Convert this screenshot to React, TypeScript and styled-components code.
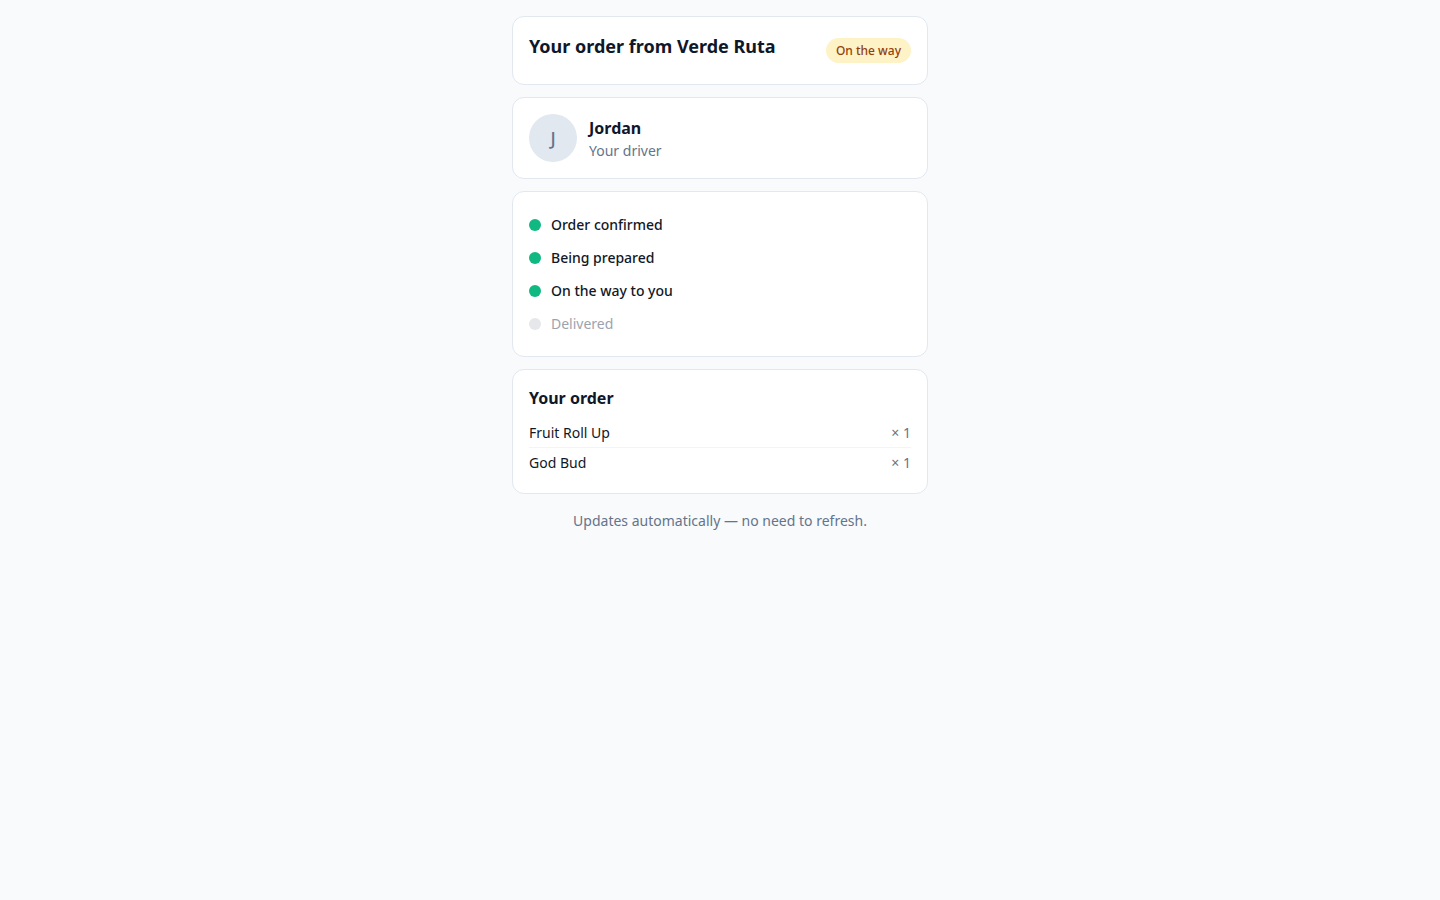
import React from "react";
import styled, { createGlobalStyle } from "styled-components";

const GlobalStyle = createGlobalStyle`
  * { box-sizing: border-box; }
  html, body { margin: 0; padding: 0; background: #f8fafc; }
  body {
    font-family: "Noto Sans", "Open Sans", sans-serif;
    color: #0f172a;
    -webkit-font-smoothing: antialiased;
  }
`;

const Page = styled.main`
  min-height: 100vh;
  background: #f8fafc;
  padding: 16px;
  display: flex;
  justify-content: center;
`;

const Column = styled.div`
  width: 416px;
  display: flex;
  flex-direction: column;
  gap: 12px;
`;

const Card = styled.section`
  background: #ffffff;
  border: 1px solid #e2e8f0;
  border-radius: 12px;
  padding: 16px;
`;

const HeaderRow = styled.div`
  display: flex;
  justify-content: space-between;
  align-items: center;
  gap: 12px;
`;

const Title = styled.h1`
  margin: 0 0 8px;
  font-size: 18px;
  line-height: 27px;
  font-weight: 700;
  color: #0f172a;
`;

const Badge = styled.span`
  display: inline-block;
  padding: 4px 10px;
  border-radius: 999px;
  background: #fef3c7;
  color: #92400e;
  font-size: 12px;
  line-height: 17px;
  font-weight: 500;
`;

const DriverRow = styled.div`
  display: flex;
  align-items: center;
  gap: 12px;
`;

const Avatar = styled.div`
  width: 48px;
  height: 48px;
  border-radius: 50%;
  background: #e2e8f0;
  color: #64748b;
  display: flex;
  align-items: center;
  justify-content: center;
  font-size: 18px;
  font-weight: 500;
`;

const DriverInfo = styled.div`
  display: flex;
  flex-direction: column;
`;

const DriverName = styled.div`
  font-size: 16px;
  line-height: 24px;
  font-weight: 700;
  color: #0f172a;
`;

const DriverRole = styled.div`
  font-size: 14px;
  line-height: 21px;
  color: #64748b;
`;

const Steps = styled.ul`
  list-style: none;
  margin: 0;
  padding: 0;
`;

const Step = styled.li<{ $done: boolean }>`
  display: flex;
  align-items: center;
  gap: 10px;
  padding: 6px 0;
  font-size: 14px;
  line-height: 21px;
  font-weight: ${(p) => (p.$done ? 500 : 400)};
  color: ${(p) => (p.$done ? "#111827" : "#9ca3af")};
`;

const Dot = styled.span<{ $done: boolean }>`
  width: 12px;
  height: 12px;
  border-radius: 50%;
  flex-shrink: 0;
  background: ${(p) => (p.$done ? "#10b981" : "#e5e7eb")};
`;

const SectionTitle = styled.h2`
  margin: 0 0 8px;
  font-size: 16px;
  line-height: 24px;
  font-weight: 700;
  color: #0f172a;
`;

const Items = styled.ul`
  list-style: none;
  margin: 0;
  padding: 0;
`;

const Item = styled.li`
  display: flex;
  justify-content: space-between;
  align-items: center;
  padding: 4px 0;
  font-size: 14px;
  line-height: 21px;
  color: #111827;
  & + & {
    border-top: 1px solid #f1f5f9;
  }
`;

const Qty = styled.span`
  color: #64748b;
  font-size: 14px;
`;

const Footer = styled.p`
  margin: 4px 0 0;
  text-align: center;
  font-size: 14px;
  line-height: 21px;
  color: #64748b;
`;

const steps = [
  { label: "Order confirmed", done: true },
  { label: "Being prepared", done: true },
  { label: "On the way to you", done: true },
  { label: "Delivered", done: false },
];

const items = [
  { name: "Fruit Roll Up", qty: 1 },
  { name: "God Bud", qty: 1 },
];

export default function App() {
  return (
    <>
      <GlobalStyle />
      <Page>
        <Column>
          <Card>
            <HeaderRow>
              <Title>Your order from Verde Ruta</Title>
              <Badge>On the way</Badge>
            </HeaderRow>
          </Card>
          <Card>
            <DriverRow>
              <Avatar>J</Avatar>
              <DriverInfo>
                <DriverName>Jordan</DriverName>
                <DriverRole>Your driver</DriverRole>
              </DriverInfo>
            </DriverRow>
          </Card>
          <Card>
            <Steps>
              {steps.map((s) => (
                <Step key={s.label} $done={s.done}>
                  <Dot $done={s.done} />
                  {s.label}
                </Step>
              ))}
            </Steps>
          </Card>
          <Card>
            <SectionTitle>Your order</SectionTitle>
            <Items>
              {items.map((it) => (
                <Item key={it.name}>
                  <span>{it.name}</span>
                  <Qty>× {it.qty}</Qty>
                </Item>
              ))}
            </Items>
          </Card>
          <Footer>Updates automatically — no need to refresh.</Footer>
        </Column>
      </Page>
    </>
  );
}
